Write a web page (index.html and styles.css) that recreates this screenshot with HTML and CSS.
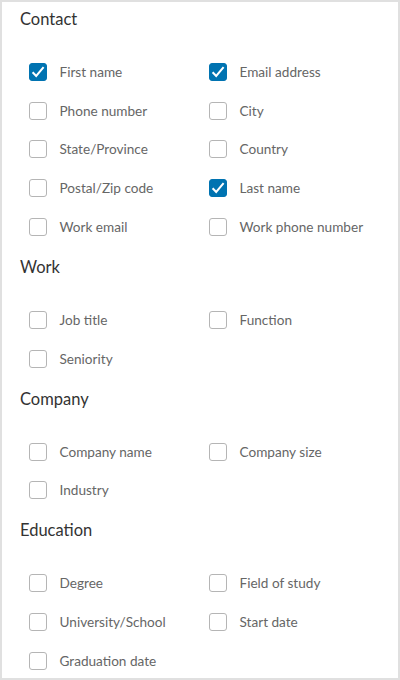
FILE: index.html
```html
<!DOCTYPE html>
<html lang="en">
<head>
    <meta charset="UTF-8">
    <meta name="viewport" content="width=device-width, initial-scale=1.0">
    <title>Fields</title>
    <link rel="stylesheet" href="styles.css">
</head>
<body>
    <div class="card">
        <section class="section">
            <h2 class="title">Contact</h2>
            <div class="grid">
                <label class="item"><span class="box checked"><svg viewBox="0 0 18 18"><path d="M3.6 9.2 L7.2 13 L14.6 4.2"/></svg></span>First name</label>
                <label class="item"><span class="box checked"><svg viewBox="0 0 18 18"><path d="M3.6 9.2 L7.2 13 L14.6 4.2"/></svg></span>Email address</label>
                <label class="item"><span class="box"></span>Phone number</label>
                <label class="item"><span class="box"></span>City</label>
                <label class="item"><span class="box"></span>State/Province</label>
                <label class="item"><span class="box"></span>Country</label>
                <label class="item"><span class="box"></span>Postal/Zip code</label>
                <label class="item"><span class="box checked"><svg viewBox="0 0 18 18"><path d="M3.6 9.2 L7.2 13 L14.6 4.2"/></svg></span>Last name</label>
                <label class="item"><span class="box"></span>Work email</label>
                <label class="item"><span class="box"></span>Work phone number</label>
            </div>
        </section>
        <section class="section">
            <h2 class="title">Work</h2>
            <div class="grid">
                <label class="item"><span class="box"></span>Job title</label>
                <label class="item"><span class="box"></span>Function</label>
                <label class="item"><span class="box"></span>Seniority</label>
            </div>
        </section>
        <section class="section">
            <h2 class="title">Company</h2>
            <div class="grid">
                <label class="item"><span class="box"></span>Company name</label>
                <label class="item"><span class="box"></span>Company size</label>
                <label class="item"><span class="box"></span>Industry</label>
            </div>
        </section>
        <section class="section">
            <h2 class="title">Education</h2>
            <div class="grid">
                <label class="item"><span class="box"></span>Degree</label>
                <label class="item"><span class="box"></span>Field of study</label>
                <label class="item"><span class="box"></span>University/School</label>
                <label class="item"><span class="box"></span>Start date</label>
                <label class="item"><span class="box"></span>Graduation date</label>
            </div>
        </section>
    </div>
</body>
</html>
```

FILE: styles.css
```css
* {
    margin: 0;
    padding: 0;
    box-sizing: border-box;
}
body {
    font-family: Lato, "Open Sans", sans-serif;
    background-color: white;
}
.card {
    width: 400px;
    height: 680px;
    border: 2px solid #e0e0e0;
    padding: 5px 0 0 18px;
    overflow: hidden;
}
.section {
    margin-bottom: 8.6px;
}
.title {
    height: 24px;
    line-height: 24px;
    font-size: 16.5px;
    font-weight: normal;
    color: #333;
    margin-bottom: 21.6px;
}
.grid {
    display: grid;
    grid-template-columns: 180px 180px;
    grid-auto-rows: 38.75px;
    align-items: center;
    padding-left: 9px;
}
.item {
    display: flex;
    align-items: center;
    gap: 12.5px;
    height: 18px;
    font-size: 13.6px;
    color: #666;
}
.box {
    width: 18px;
    height: 18px;
    border: 1px solid #b5b5b5;
    border-radius: 3px;
    flex-shrink: 0;
    display: flex;
    position: relative;
}
.box.checked {
    background-color: #0073b1;
    border-color: #0073b1;
}
.box svg {
    position: absolute;
    left: -1px;
    top: -1px;
    width: 18px;
    height: 18px;
}
.box path {
    fill: none;
    stroke: white;
    stroke-width: 2;
}
```
